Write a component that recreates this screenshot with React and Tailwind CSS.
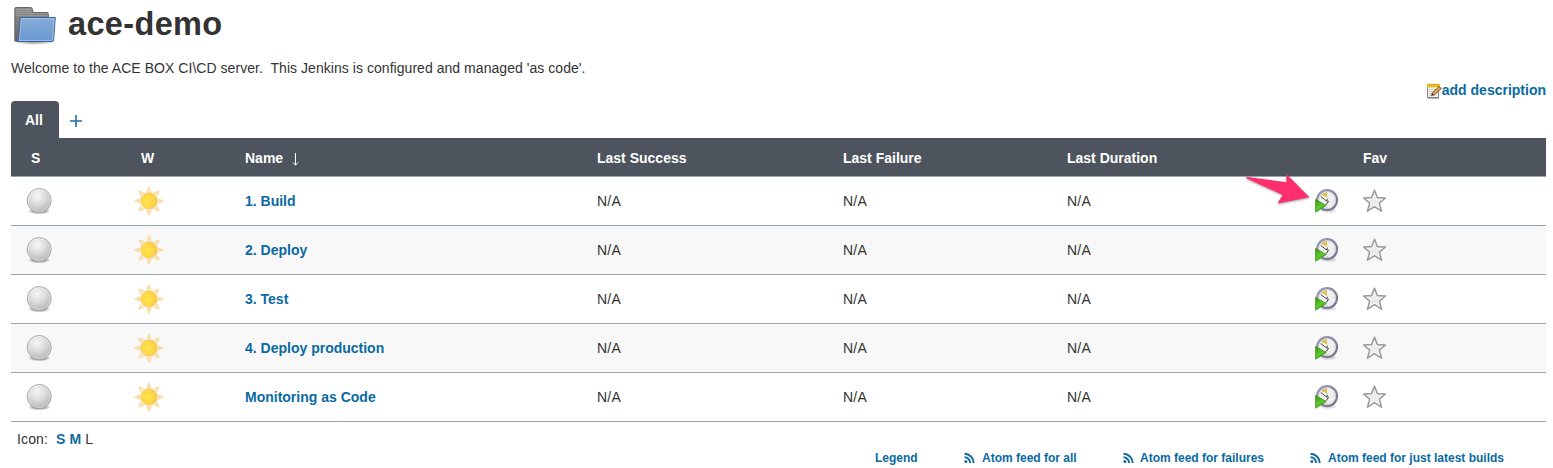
import React from 'react';

const COLS = 'grid grid-cols-[124px_110px_352px_246px_224px_247px_49px_183px] items-center';
const JOBS = ['1. Build', '2. Deploy', '3. Test', '4. Deploy production', 'Monitoring as Code'];

function FolderIcon() {
  return (
    <svg width="48" height="48" viewBox="0.7 -0.5 48 48" className="block shrink-0">
      <defs>
        <linearGradient id="folderBack" x1="0" y1="0" x2="0" y2="1">
          <stop offset="0" stopColor="#8d8d8d" />
          <stop offset="1" stopColor="#666" />
        </linearGradient>
        <linearGradient id="folderFront" x1="0" y1="0" x2="0" y2="1">
          <stop offset="0" stopColor="#86abd8" />
          <stop offset="1" stopColor="#6a98d0" />
        </linearGradient>
        <radialGradient id="folderShadow">
          <stop offset="0" stopColor="#000" stopOpacity="0.5" />
          <stop offset="1" stopColor="#000" stopOpacity="0" />
        </radialGradient>
      </defs>
      <ellipse cx="24" cy="41" rx="22" ry="3.5" fill="url(#folderShadow)" />
      <path d="M4.500 40.500V8q0-1 1-1H20.500q1 0 1.300 1l1.200 4H37q1 0 1 1V40.500Z" fill="url(#folderBack)" stroke="#666" />
      <path d="M5.500 9H21M5.500 11H21.500M5.500 13H37M5.500 15H37" stroke="#a5a5a5" strokeWidth="0.6" />
      <path d="M10 17H45L43.300 39.500q-.1 1.500-1.500 1.500H6.500q1.600-.2 1.900-2Z" fill="url(#folderFront)" stroke="#3465a4" />
      <path d="M11 18.100H43.800L42.300 39q-.1 1-1 1H9Z" fill="none" stroke="#b3cdec" strokeWidth="0.7" />
    </svg>
  );
}

function BallIcon() {
  return (
    <svg width="30" height="30" viewBox="0 0 30 30" className="ml-[13px] block">
      <defs>
        <radialGradient id="ball" cx="0.42" cy="0.3" r="0.72">
          <stop offset="0" stopColor="#f6f6f6" />
          <stop offset="0.45" stopColor="#dedede" />
          <stop offset="1" stopColor="#b4b4b4" />
        </radialGradient>
        <radialGradient id="ballShadow">
          <stop offset="0" stopColor="#000" stopOpacity="0.5" />
          <stop offset="0.6" stopColor="#000" stopOpacity="0.3" />
          <stop offset="1" stopColor="#000" stopOpacity="0" />
        </radialGradient>
      </defs>
      <ellipse cx="15.200" cy="25" rx="11.500" ry="3.400" fill="url(#ballShadow)" />
      <circle cx="15.200" cy="14.500" r="12" fill="url(#ball)" stroke="#a0a0a0" strokeWidth="0.900" />
      <circle cx="15.200" cy="14.500" r="11" fill="none" stroke="#fff" strokeOpacity="0.5" strokeWidth="0.8" />
    </svg>
  );
}

function SunIcon() {
  return (
    <svg width="30" height="30" viewBox="-15 -15 30 30" className="-ml-px block">
      <defs>
        <radialGradient id="sun" cx="0.4" cy="0.5" r="0.65">
          <stop offset="0" stopColor="#ffe44c" />
          <stop offset="0.6" stopColor="#fdd645" />
          <stop offset="1" stopColor="#f8b545" />
        </radialGradient>
      </defs>
      {[0, 45, 90, 135, 180, 225, 270, 315].map((a) => (
        <path key={a} d="M-2 -9.700 0 -14.200 2 -9.700Q0 -10.400 -2 -9.700Z" fill="#fde7b0" stroke="#f9d28a" strokeWidth="0.8" transform={`rotate(${a})`} />
      ))}
      <circle r="8.300" fill="url(#sun)" stroke="#f7bc5c" strokeWidth="0.8" />
      <circle r="7.300" fill="none" stroke="#ffe98a" strokeWidth="0.5" opacity="0.7" />
    </svg>
  );
}

function ClockIcon() {
  return (
    <svg width="26" height="26" viewBox="0 0 26 26" className="block">
      <defs>
        <linearGradient id="rim" x1="0" y1="0" x2="1" y2="1">
          <stop offset="0" stopColor="#9c9cb6" />
          <stop offset="1" stopColor="#73738f" />
        </linearGradient>
        <linearGradient id="play" x1="0" y1="0" x2="0.6" y2="1">
          <stop offset="0" stopColor="#2f930c" />
          <stop offset="0.6" stopColor="#5fc92c" />
          <stop offset="1" stopColor="#2d940e" />
        </linearGradient>
      </defs>
      <ellipse cx="14.500" cy="22.800" rx="8" ry="1.900" fill="#000" opacity="0.1" />
      <circle cx="13.100" cy="12.100" r="9.900" fill="#efefee" stroke="url(#rim)" strokeWidth="2.300" />
      <circle cx="13.100" cy="12.100" r="8.500" fill="none" stroke="#d4d4da" strokeWidth="0.6" />
      <path d="M13 11.500 7.300 6.500Q9.500 4.200 13 4.100Z" fill="#ddc25c" />
      <path d="M6.800 8.500 12 12.400 13.900 10.800M12 12.400 14.500 13.400 12 16.700" stroke="#333" strokeWidth="1" fill="none" />
      <path d="M7.600 8.400 10.600 8.200 13.300 10.800 12 11.700Z" fill="#fff" />
      <path d="M19.500 12h1.300M13 19v1.200" stroke="#bbb" strokeWidth="0.900" />
      <path d="M1.600 11.400 12.300 17.500 1.600 24.200Z" fill="url(#play)" stroke="#2f8d15" strokeWidth="0.700" />
    </svg>
  );
}

function StarIcon() {
  return (
    <svg width="24" height="24" viewBox="0 0 24 24" className="block">
      <path d="M11.500 1.200 14.400 8.600 22.400 9 16.300 14.100 18.500 22.200 11.500 17.700 4.500 22.200 6.700 14.100.6 9 8.600 8.600Z" fill="#fff" stroke="#9c9c9c" strokeWidth="1.600" strokeLinejoin="round" />
      <path d="M11.500 5.200 13.400 10.200 18.700 10.600 14.600 14 16 19 11.500 16.100 7 19 8.400 14 4.300 10.600 9.600 10.200Z" fill="#ebebeb" />
    </svg>
  );
}

function NotepadIcon() {
  return (
    <svg width="16" height="16" viewBox="0 0 16 16" className="mt-0.5 block">
      <path d="M1.500 2.500H12.500V14.500H1.500Z" fill="#f2f2ef" stroke="#888a85" />
      <path d="M1.500 15.300H13" stroke="#777" strokeWidth="0.700" />
      <path d="M3 6.500h7M3 8.500h6M3 10.500h4M3 12.500h6" stroke="#c2c2bf" strokeWidth="0.800" />
      <path d="M1 1H14V4.500H1Z" fill="#edcb35" />
      <path d="M2 .5v3M4 .5v3M6 .5v3M8 .5v3M10 .5v3M12 .5v3" stroke="#c9a30c" strokeWidth="0.900" />
      <path d="M5.500 12.300 6.500 9.700 13 3.400 15.300 5.500 8.600 11.700Z" fill="#e5a452" stroke="#67451f" strokeWidth="0.900" />
      <path d="M5.500 12.300 6.300 10.500 7.800 11.700Z" fill="#222" />
    </svg>
  );
}

function RssIcon() {
  return (
    <svg width="12" height="12" viewBox="0 0 12 12" className="block" fill="none" stroke="#15699f">
      <path d="M.5 1.800A9.300 9.300 0 0 1 9.700 11M.5 5.300A5.700 5.700 0 0 1 6.200 11" strokeWidth="1.900" />
      <circle cx="1.900" cy="9.600" r="1.500" fill="#15699f" stroke="none" />
    </svg>
  );
}

function PointerArrow() {
  return (
    <svg width="68" height="36" viewBox="0 0 68 36" className="pointer-events-none absolute left-[1232px] -top-[3px] z-10 overflow-visible">
      <path d="M3.300 4.300Q3 2.800 5 3.100L43.500 8.200 43.200 1.300Q43.500.3 44.700 1.200L66.500 23.300 36.200 29.300Q34.500 29.400 35.300 28L39.700 21Z" fill="#ff2e6c" className="drop-shadow-[0_1px_1px_rgba(0,0,0,0.35)]" />
    </svg>
  );
}

function Feed({ children, className }) {
  return (
    <a className={`flex items-center ${className}`}>
      <RssIcon />
      <span>{children}</span>
    </a>
  );
}

export default function App() {
  return (
    <div className="h-[468px] overflow-hidden bg-white pl-[11px] pr-[7px] font-['Liberation_Sans',Arial,sans-serif] text-[14px] leading-5 text-[#333]">
      <header className="flex h-12 items-center gap-[9px]">
        <FolderIcon />
        <h1 className="text-[32.500px] font-bold leading-[46px] tracking-[0.35px]">ace-demo</h1>
      </header>
      <p className="mt-[10px] h-5 whitespace-pre tracking-[0.045px]">{"Welcome to the ACE BOX CI\\CD server.  This Jenkins is configured and managed 'as code'."}</p>
      <div className="mb-px mt-px flex h-[21px] items-center justify-end font-bold text-[#0b6aa2]">
        <NotepadIcon />
        <a>add description</a>
      </div>
      <nav className="flex h-[37px] items-stretch">
        <a className="w-12 rounded-t-[4px] bg-[#4d545d] pl-[14px] pt-[9px] font-bold text-white">All</a>
        <a className="ml-[11px] flex items-center pt-[3px]">
          <svg width="12" height="12" viewBox="0 0 12 12" className="block" stroke="#1d70a6" strokeWidth="1.600">
            <path d="M0 6H12M6 0V12" />
          </svg>
        </a>
      </nav>
      <main className="w-[1535px]">
        <div className={`${COLS} h-[39px] border-b border-[#98a5ad] bg-[#4d545d] pt-[2px] font-bold text-white`}>
          <span className="pl-5">S</span>
          <span className="pl-[6px]">W</span>
          <span className="flex items-center gap-[8px]">
            Name
            <svg width="8" height="13" viewBox="0 0 8 13" className="mt-[3px] block" fill="none" stroke="white" strokeWidth="1">
              <path d="M4.500 0V12M2 9.500 4.500 12.200 7 9.500" />
            </svg>
          </span>
          <span>Last Success</span>
          <span>Last Failure</span>
          <span>Last Duration</span>
          <span />
          <span>Fav</span>
        </div>
        <div className="relative">
          {JOBS.map((name, i) => (
            <div key={name} className={`${COLS} h-[49px] border-b border-[#98a5ad] ${i % 2 ? 'bg-[#f8f8f8]' : 'bg-white'}`}>
              <BallIcon />
              <SunIcon />
              <a className="font-bold text-[#0b6aa2]">{name}</a>
              <span className="tracking-[0.2px]">N/A</span>
              <span className="tracking-[0.2px]">N/A</span>
              <span className="tracking-[0.2px]">N/A</span>
              <ClockIcon />
              <StarIcon />
            </div>
          ))}
          <PointerArrow />
        </div>
      </main>
      <footer>
        <div className="flex h-[26px] items-end pl-[6px]">
          <span className="mb-[-1px] whitespace-pre tracking-[0.12px]">Icon:  <b className="text-[#0b6aa2]">S</b> <b className="text-[#0b6aa2]">M</b> L</span>
        </div>
        <div className="flex h-5 items-center pl-[864px] text-[12px] font-bold text-[#0b6aa2]">
          <a className="w-[89px]">Legend</a>
          <Feed className="w-[159px] gap-[6px]">Atom feed for all</Feed>
          <Feed className="w-[187px] gap-[5px]">Atom feed for failures</Feed>
          <Feed className="gap-[6px] whitespace-nowrap">Atom feed for just latest builds</Feed>
        </div>
      </footer>
    </div>
  );
}
